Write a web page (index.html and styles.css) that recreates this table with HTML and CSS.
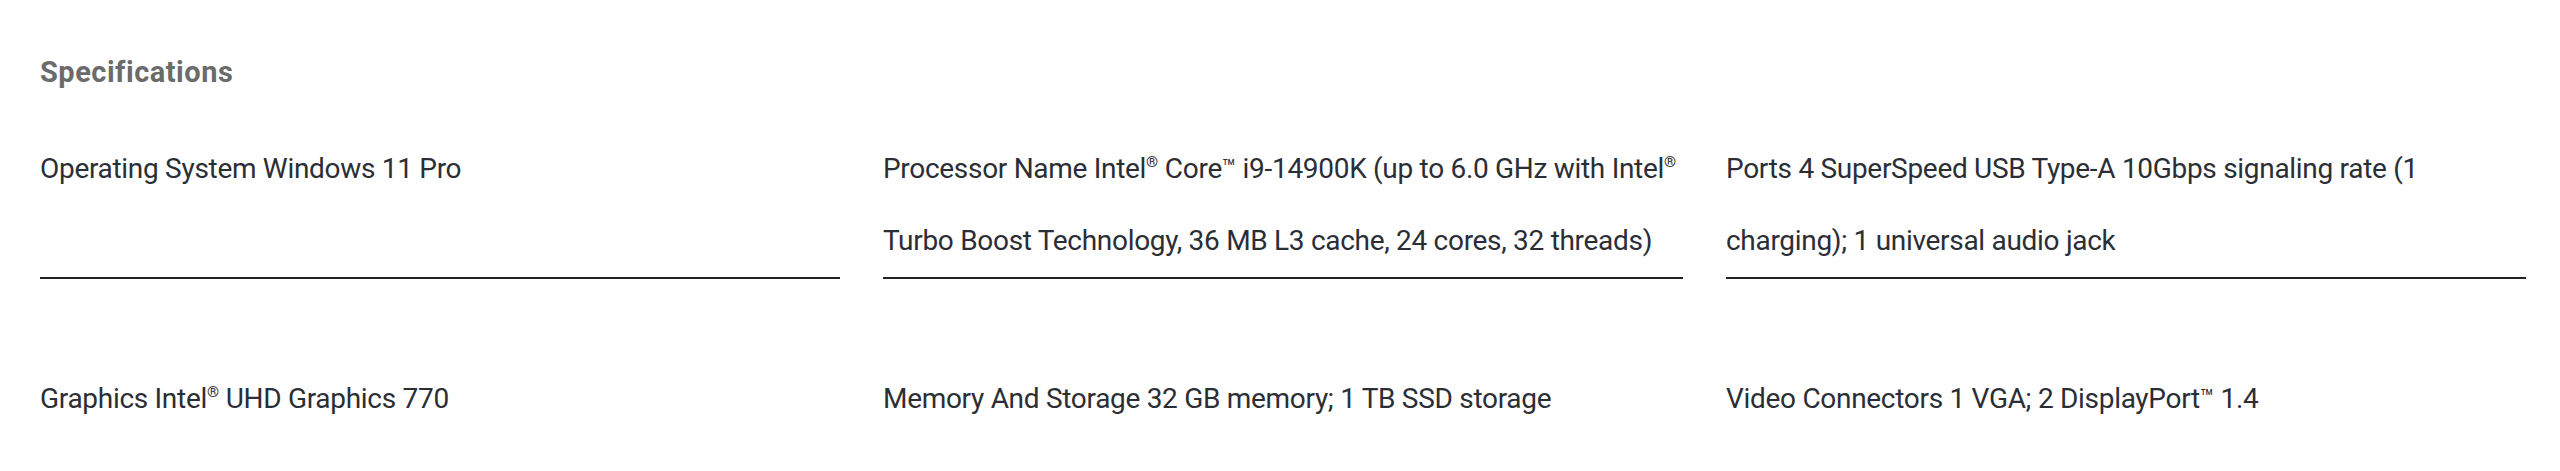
FILE: index.html
```html
<!DOCTYPE html>
<html lang="en">
<head>
<meta charset="utf-8">
<title>Specifications</title>
<link rel="stylesheet" href="styles.css">
</head>
<body>
<section class="specs">
  <h2 class="specs-title">Specifications</h2>
  <div class="specs-grid">
    <div class="spec-item">Operating System Windows 11 Pro</div>
    <div class="spec-item">Processor Name Intel<span class="mark">®</span> Core<span class="tm">™</span> i9-14900K (up to 6.0 GHz with Intel<span class="mark">®</span> Turbo Boost Technology, 36 MB L3 cache, 24 cores, 32 threads)</div>
    <div class="spec-item">Ports 4 SuperSpeed USB Type-A 10Gbps signaling rate (1 charging); 1 universal audio jack</div>
    <div class="spec-item">Graphics Intel<span class="mark">®</span> UHD Graphics 770</div>
    <div class="spec-item">Memory And Storage 32 GB memory; 1 TB SSD storage</div>
    <div class="spec-item">Video Connectors 1 VGA; 2 DisplayPort<span class="tm">™</span> 1.4</div>
  </div>
</section>
</body>
</html>
```
FILE: styles.css
```css
html, body {
  margin: 0;
  padding: 0;
  background: #ffffff;
}

body {
  font-family: Roboto, "Liberation Sans", sans-serif;
  color: #2b2e35;
}

.specs {
  padding: 0 34px 0 40px;
}

.specs-title {
  margin: 0;
  padding-top: 54px;
  font-size: 29px;
  line-height: 36px;
  font-weight: 700;
  color: #6b6b6b;
  letter-spacing: 0.5px;
}

.specs-grid {
  margin-top: 43px;
  display: grid;
  grid-template-columns: repeat(3, 800px);
  column-gap: 43px;
  row-gap: 84px;
}

.spec-item {
  font-size: 28px;
  line-height: 72px;
  letter-spacing: -0.3px;
  border-bottom: 2px solid #222222;
}

.spec-item:nth-last-child(-n+3) {
  border-bottom: none;
}

.mark {
  font-size: 0.55em;
  line-height: 0;
  vertical-align: 0.7em;
  letter-spacing: 0;
}

.tm {
  font-size: 0.8em;
  line-height: 0;
  vertical-align: 0.15em;
  letter-spacing: 0;
}
```
